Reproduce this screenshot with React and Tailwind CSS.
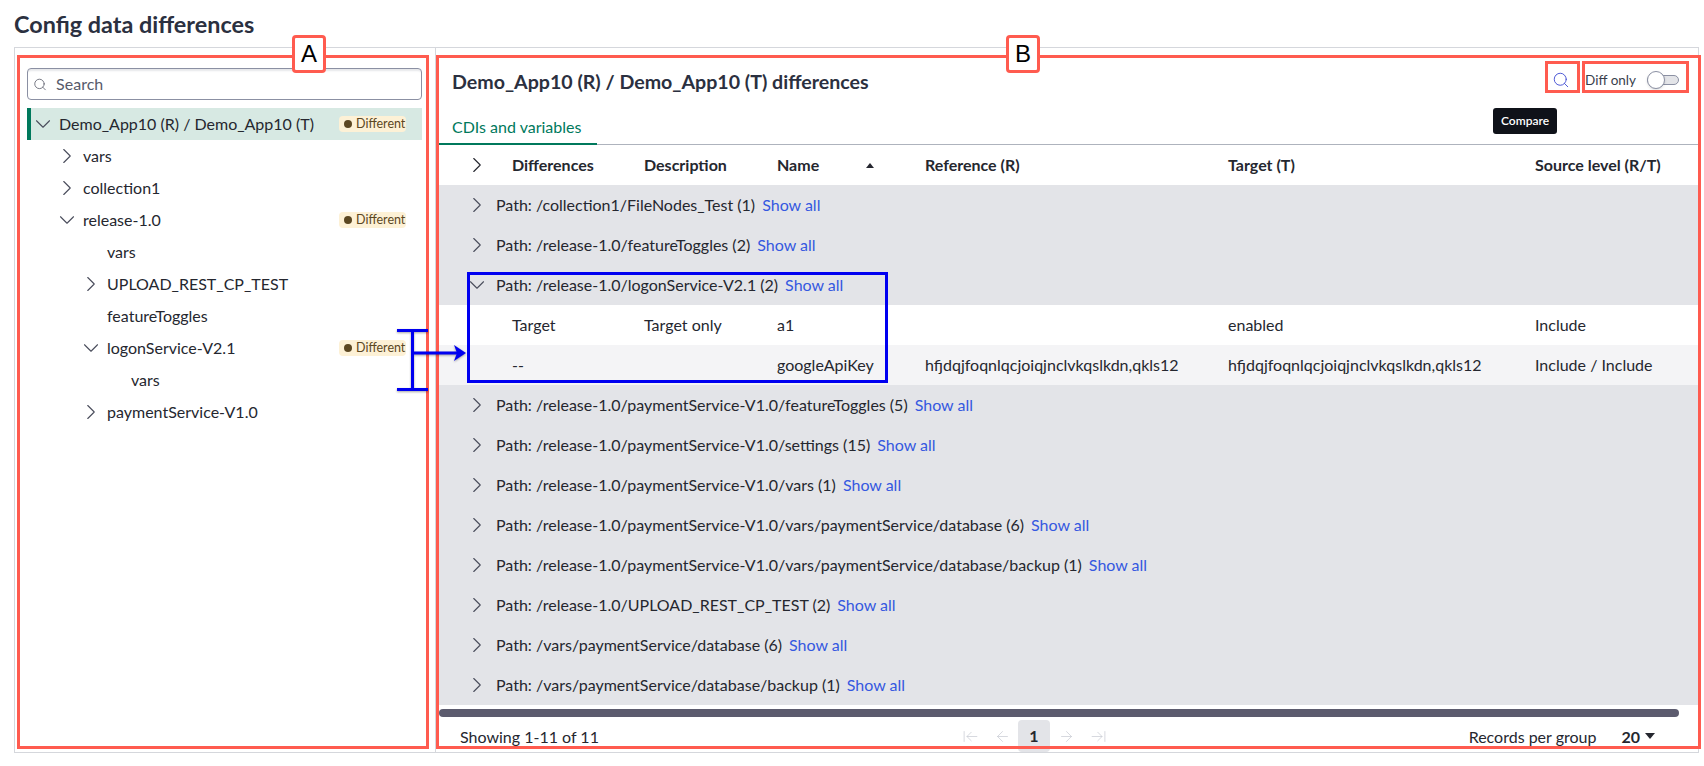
import { ArrowLeft, ArrowLeftToLine, ArrowRight, ArrowRightToLine, ChevronDown, ChevronRight, Search } from 'lucide-react';

const TREE = [
  { label: 'Demo_App10 (R) / Demo_App10 (T)', indent: 'pl-[3px]', open: true, badge: true, selected: true },
  { label: 'vars', indent: 'pl-[27px]', closed: true },
  { label: 'collection1', indent: 'pl-[27px]', closed: true },
  { label: 'release-1.0', indent: 'pl-[27px]', open: true, badge: true },
  { label: 'vars', indent: 'pl-[51px]' },
  { label: 'UPLOAD_REST_CP_TEST', indent: 'pl-[51px]', closed: true },
  { label: 'featureToggles', indent: 'pl-[51px]' },
  { label: 'logonService-V2.1', indent: 'pl-[51px]', open: true, badge: true },
  { label: 'vars', indent: 'pl-[75px]' },
  { label: 'paymentService-V1.0', indent: 'pl-[51px]', closed: true }
];

const GROUPS_BEFORE = ['/collection1/FileNodes_Test (1)', '/release-1.0/featureToggles (2)'];
const GROUPS_AFTER = [
  '/release-1.0/paymentService-V1.0/featureToggles (5)',
  '/release-1.0/paymentService-V1.0/settings (15)',
  '/release-1.0/paymentService-V1.0/vars (1)',
  '/release-1.0/paymentService-V1.0/vars/paymentService/database (6)',
  '/release-1.0/paymentService-V1.0/vars/paymentService/database/backup (1)',
  '/release-1.0/UPLOAD_REST_CP_TEST (2)',
  '/vars/paymentService/database (6)',
  '/vars/paymentService/database/backup (1)'
];

const COLS = 'grid grid-cols-[73px_132px_133px_148px_303px_307px_163px] items-center h-10';

function Chevron({ open }) {
  const Icon = open ? ChevronDown : ChevronRight;
  return <Icon size={26} strokeWidth={1} className="shrink-0 text-[#4a4d5c]" />;
}

function TreeRow({ row }) {
  return (
    <div className={`flex h-8 items-center pr-4 ${row.indent} ${row.selected ? 'bg-[#d7e9e3] shadow-[inset_4px_0_0_#00795c]' : ''}`}>
      {row.open || row.closed ? <Chevron open={row.open} /> : <span className="w-[26px] shrink-0" />}
      <span className="ml-[3px] text-[16px] text-[#25272f]">{row.label}</span>
      {row.badge && (
        <span className="ml-auto flex h-4 w-[67px] items-center gap-[4px] rounded-sm bg-[#fdf1d6] pl-[5px] text-[12.5px] text-[#5b4722]">
          <span className="h-2 w-2 rounded-full bg-[#5b4722]" />
          Different
        </span>
      )}
    </div>
  );
}

function GroupRow({ path, open }) {
  return (
    <div className="flex h-10 items-center bg-[#e3e4e8] pl-[25px] text-[16px] text-[#25272f]">
      <Chevron open={open} />
      <span className="ml-[6px]">Path: {path}</span>
      <a className="ml-[7px] text-[#3558e0]">Show all</a>
    </div>
  );
}

function Frame({ className }) {
  return <div className={`pointer-events-none absolute border-[3px] border-[#ff5b4f] ${className}`} />;
}

function Tag({ className, children }) {
  return (
    <div className={`absolute flex h-[38px] w-[34px] items-center justify-center rounded-[4px] border-[3px] border-[#ff5b4f] bg-white font-['Liberation_Sans',sans-serif] text-[24px] text-black ${className}`}>
      {children}
    </div>
  );
}

export default function App() {
  return (
    <div className="relative h-[766px] w-[1704px] overflow-hidden bg-white font-['Lato',sans-serif]">
      <h1 className="flex h-[47px] items-center pl-[14px] pt-[2px] text-[23.4px] font-bold text-[#2b3040]">Config data differences</h1>

      <div className="ml-[14px] flex h-[706px] w-[1685px] border border-[#d5d7dc]">
        {/* Tree panel */}
        <div className="w-[421px] shrink-0 border-r border-[#d5d7dc] pl-3 pt-5">
          <div className="w-[395px]">
            <div className="flex h-8 items-center gap-[9px] rounded-[4px] border border-[#8b90a3] pl-[5px] shadow-[inset_0_3px_2px_-1px_#e6e7ea]">
              <Search size={15} strokeWidth={1.25} className="text-[#4a4d5c]" />
              <input placeholder="Search" className="w-full bg-transparent text-[16px] outline-none placeholder:text-[#565a6b]" />
            </div>
            <div className="mt-2">
              {TREE.map((row, i) => (
                <TreeRow key={i} row={row} />
              ))}
            </div>
          </div>
        </div>

        {/* Differences panel */}
        <div className="min-w-0 flex-1 pl-[3px]">
          <div className="flex h-[64px] items-center pl-[13px]">
            <h2 className="mt-[3px] text-[19.6px] font-bold text-[#2b3040]">Demo_App10 (R) / Demo_App10 (T) differences</h2>
            <Search size={18} strokeWidth={1.2} className="ml-auto text-[#3d49d1]" />
            <span className="ml-[15px] text-[13.5px] text-[#3a3e4c]">Diff only</span>
            <span className="relative ml-[11px] mr-[19px] block h-[10px] w-[32px] rounded-full border border-[#8b90a3] bg-[#e3e4e8]">
              <span className="absolute left-[-1px] top-[-5px] h-[18px] w-[18px] rounded-full border border-[#8b90a3] bg-white shadow-sm" />
            </span>
          </div>

          <div className="h-[33px] border-b border-[#aeb3bd]">
            <div className="flex h-[33px] w-[158px] items-end border-b-2 border-[#00795c] pb-[4px] pl-[13px] text-[16px] text-[#00795c]">CDIs and variables</div>
          </div>

          <div className={`${COLS} text-[16px] font-bold text-[#25272f]`}>
            <span className="pl-[25px]">
              <ChevronRight size={26} strokeWidth={1} className="text-[#25272f]" />
            </span>
            <span>Differences</span>
            <span>Description</span>
            <span className="flex items-center">
              Name
              <span className="ml-[47px] h-0 w-0 border-x-[4px] border-b-[5px] border-x-transparent border-b-[#25272f]" />
            </span>
            <span>Reference (R)</span>
            <span>Target (T)</span>
            <span>Source level (R/T)</span>
          </div>

          {GROUPS_BEFORE.map((path) => (
            <GroupRow key={path} path={path} />
          ))}
          <GroupRow path="/release-1.0/logonService-V2.1 (2)" open />
          <div className={`${COLS} text-[16px] text-[#25272f]`}>
            <span />
            <span>Target</span>
            <span>Target only</span>
            <span>a1</span>
            <span />
            <span>enabled</span>
            <span>Include</span>
          </div>
          <div className={`${COLS} bg-[#f4f4f6] text-[16px] text-[#25272f]`}>
            <span />
            <span>--</span>
            <span />
            <span>googleApiKey</span>
            <span>hfjdqjfoqnlqcjoiqjnclvkqslkdn,qkls12</span>
            <span>hfjdqjfoqnlqcjoiqjnclvkqslkdn,qkls12</span>
            <span>Include / Include</span>
          </div>
          {GROUPS_AFTER.map((path) => (
            <GroupRow key={path} path={path} />
          ))}

          <div className="mt-1 h-2 w-[1240px] rounded-full bg-[#5c5b6e]" />

          <div className="flex h-[35px] items-start text-[16px] text-[#25272f]">
            <span className="w-[515px] pl-[21px] pt-[8px]">Showing 1-11 of 11</span>
            <div className="flex pt-[3px] text-[#c6c9d1]">
              <span className="flex h-8 w-8 items-center justify-center"><ArrowLeftToLine size={17} strokeWidth={1} /></span>
              <span className="flex h-8 w-8 items-center justify-center"><ArrowLeft size={17} strokeWidth={1} /></span>
              <span className="flex h-8 w-8 items-center justify-center rounded-[4px] bg-[#e3e4e8] font-bold text-[#25272f]">1</span>
              <span className="flex h-8 w-8 items-center justify-center"><ArrowRight size={17} strokeWidth={1} /></span>
              <span className="flex h-8 w-8 items-center justify-center"><ArrowRightToLine size={17} strokeWidth={1} /></span>
            </div>
            <span className="ml-auto pt-[8px]">Records per group</span>
            <span className="ml-[25px] pt-[8px] font-bold">20</span>
            <span className="ml-[5px] mr-[43px] mt-[16px] h-0 w-0 border-x-[5px] border-t-[6px] border-x-transparent border-t-[#25272f]" />
          </div>
        </div>
      </div>

      {/* Tooltip over the toolbar */}
      <div className="absolute left-[1493px] top-[108px] flex h-[26px] w-[64px] items-center justify-center rounded-[3px] bg-[#0f1219] text-[12px] font-semibold text-white">Compare</div>

      {/* Red callouts */}
      <Frame className="left-[17px] top-[55px] h-[694px] w-[412px]" />
      <Frame className="left-[436px] top-[55px] h-[694px] w-[1265px]" />
      <Frame className="left-[1545px] top-[61px] h-[32px] w-[35px]" />
      <Frame className="left-[1582px] top-[61px] h-[32px] w-[107px]" />
      <Tag className="left-[292px] top-[35px]">A</Tag>
      <Tag className="left-[1006px] top-[35px]">B</Tag>

      {/* Blue callout */}
      <div className="pointer-events-none absolute left-[467px] top-[272px] h-[111px] w-[421px] border-[3px] border-[#0000f0]" />
      <svg className="pointer-events-none absolute left-[395px] top-[325px] drop-shadow-[0_1px_1px_rgba(0,0,0,0.35)]" width="75" height="70" viewBox="0 0 75 70" fill="none">
        <path d="M2 5.5H33M2 64.5H33M17.5 5.5V64.5M17.5 28H62" stroke="#0000f0" strokeWidth="3" />
        <path d="M59 20L71 28L59 36L62 28Z" fill="#0000f0" />
      </svg>
    </div>
  );
}
